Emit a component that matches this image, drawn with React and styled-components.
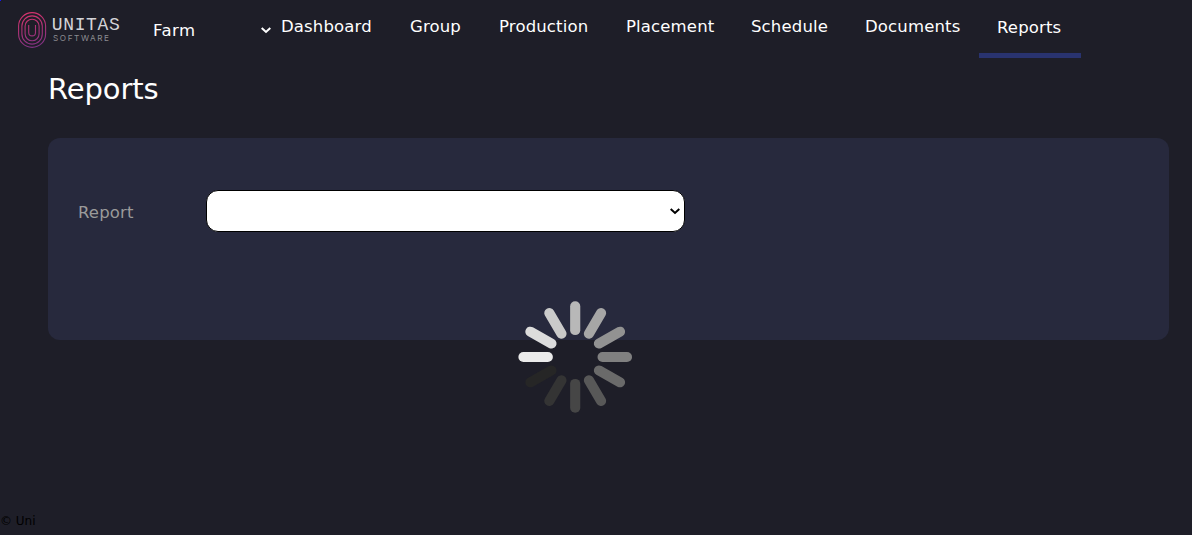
import React from "react";
import styled, { createGlobalStyle } from "styled-components";

const GlobalStyle = createGlobalStyle`
  * { box-sizing: border-box; }
  body {
    margin: 0;
    background: #1e1e28;
    font-family: "DejaVu Sans", Verdana, sans-serif;
    color: #fff;
  }
`;

const Page = styled.div`
  position: relative;
  display: flex;
  flex-direction: column;
  height: 535px;
  overflow: hidden;
`;

const Corner = styled.span`
  position: absolute;
  left: 0;
  top: 0;
  width: 1px;
  height: 1px;
  background: #1414ff;
`;

const Header = styled.header`
  display: flex;
  align-items: flex-start;
  height: 58px;
  flex: none;
`;

const Logo = styled.svg`
  width: 110px;
  height: 40px;
  margin: 10px 0 0 16px;
  flex: none;
`;

const FarmSelect = styled.div`
  display: flex;
  align-items: center;
  justify-content: space-between;
  width: 119px;
  height: 22px;
  margin: 19px 0 0 27px;
  font-size: 16.5px;
  letter-spacing: 0.5px;
`;

const Nav = styled.nav`
  display: flex;
  align-items: flex-start;
  margin-left: -10px;
`;

const NavItem = styled.a`
  height: ${(p) => (p.$active ? 58 : 52)}px;
  padding: ${(p) => (p.$active ? "18px 0 0 18px" : "17px 0 0 19px")};
  width: ${(p) => p.$w}px;
  border-bottom: ${(p) => (p.$active ? "5px solid #29336f" : "0")};
  font-size: 16.5px;
  line-height: 20px;
  letter-spacing: 0.15px;
  white-space: nowrap;
`;

const Main = styled.main`
  flex: 1;
  padding: 0 23px 0 48px;
`;

const Title = styled.h1`
  margin: 13px 0 0;
  height: 67px;
  font-size: 29px;
  line-height: 36px;
  font-weight: 400;
  letter-spacing: -0.1px;
`;

const Panel = styled.section`
  display: flex;
  align-items: flex-start;
  height: 202px;
  padding: 52px 30px 0;
  border-radius: 12px;
  background: #27293d;
`;

const Label = styled.label`
  width: 128px;
  font-size: 16.5px;
  line-height: 46px;
  letter-spacing: 0.15px;
  color: #9a9a9a;
`;

const SelectBox = styled.div`
  display: flex;
  align-items: center;
  justify-content: flex-end;
  width: 479px;
  height: 42px;
  padding-right: 3px;
  border: 1px solid #000;
  border-radius: 12px;
  background: #fff;
`;

const Chevron = styled.svg`
  width: 12px;
  height: 8px;
  fill: none;
  stroke: ${(p) => p.$color};
  stroke-width: 2;
`;

const Spinner = styled.svg`
  position: absolute;
  left: 515px;
  top: 297px;
  width: 120px;
  height: 120px;
`;

const Footer = styled.footer`
  height: 22px;
  font-size: 12px;
  line-height: 17px;
  color: #000;
`;

const ITEMS = [
  ["Dashboard", 129],
  ["Group", 89],
  ["Production", 127],
  ["Placement", 125],
  ["Schedule", 114],
  ["Documents", 133],
  ["Reports", 102],
];

const SPOKES = [
  "#b8b8b8", "#a6a6a6", "#929292", "#808080", "#6a6a6a", "#585858",
  "#464646", "#343434", "#262626", "#ebebeb", "#dcdcdc", "#cacaca",
];

const Arrow = ({ color }) => (
  <Chevron viewBox="0 0 12 8" $color={color}>
    <path d="M1.7 2 L6 6 L10.3 2" />
  </Chevron>
);

export default function App() {
  return (
    <Page>
      <GlobalStyle />
      <Corner />
      <Header>
        <Logo viewBox="16 10 110 40">
          <defs>
            <linearGradient id="mark" gradientUnits="userSpaceOnUse" x1="26" y1="12" x2="36" y2="48">
              <stop offset="0" stopColor="#d8336b" />
              <stop offset="1" stopColor="#7c3284" />
            </linearGradient>
          </defs>
          <g fill="none" stroke="url(#mark)" strokeWidth="1.1">
            <rect x="18.6" y="12.6" width="27" height="34.8" rx="13.5" />
            <rect x="21.9" y="15.9" width="20.4" height="28.2" rx="10.2" />
            <rect x="25.1" y="19.2" width="14" height="21.6" rx="7" />
            <path d="M28.7 25 V32.5 A3.4 3.4 0 0 0 35.5 32.5 V25" />
          </g>
          <text x="51.8" y="30.3" fontFamily="'Liberation Mono', monospace" fontSize="18" fill="#d4d4d8" textLength="68" lengthAdjust="spacing">UNITAS</text>
          <text x="53" y="41.2" fontFamily="Inter, sans-serif" fontSize="8.2" fill="#8c8c91" textLength="56" lengthAdjust="spacing">SOFTWARE</text>
        </Logo>
        <FarmSelect>
          Farm
          <Arrow color="#fff" />
        </FarmSelect>
        <Nav>
          {ITEMS.map(([name, w]) => (
            <NavItem key={name} $w={w} $active={name === "Reports"}>{name}</NavItem>
          ))}
        </Nav>
      </Header>
      <Main>
        <Title>Reports</Title>
        <Panel>
          <Label>Report</Label>
          <SelectBox><Arrow color="#000" /></SelectBox>
        </Panel>
      </Main>
      <Spinner viewBox="-60 -60 120 120">
        <g transform="translate(0.2 0) scale(1.015 0.995)">
          {SPOKES.map((c, i) => (
            <rect key={c} x="-5" y="-56" width="10" height="34" rx="5" fill={c} transform={`rotate(${i * 30})`} />
          ))}
        </g>
      </Spinner>
      <Footer>© Uni</Footer>
    </Page>
  );
}
